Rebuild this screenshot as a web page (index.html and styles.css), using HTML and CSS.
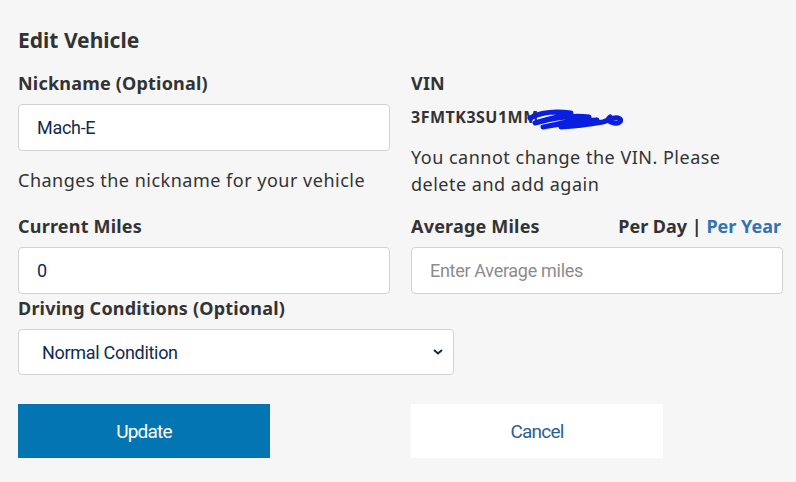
FILE: index.html
```html
<!DOCTYPE html>
<html lang="en">
<head>
  <meta charset="UTF-8" />
  <meta name="viewport" content="width=device-width, initial-scale=1.0" />
  <title>Edit Vehicle</title>
  <link rel="stylesheet" href="styles.css">
</head>
<body>

<h1 class="title">Edit Vehicle</h1>

<div class="row row-top">
  <div class="field">
    <label class="label" for="nickname">Nickname (Optional)</label>
    <input id="nickname" class="input" type="text" value="Mach-E" />
    <p class="help">Changes the nickname for your vehicle</p>
  </div>
  <div class="field">
    <div class="label">VIN</div>
    <div class="vin">3FMTK3SU1MM<svg class="scribble" width="96" height="22" viewBox="0 0 96 22"><path d="M3 10 C14 4 30 3 44 5 C36 8 20 11 8 15 C26 10 46 7 62 9 C50 12 30 16 16 19 C34 16 54 13 70 12 C58 14 44 17 34 19 C50 18 64 16 76 14 C82 12 86 9 91 10 C96 11 94 16 87 15 C81 14 80 11 83 9" fill="none" stroke="#0a1ee0" stroke-width="5" stroke-linecap="round" stroke-linejoin="round"/></svg></div>
    <p class="note">You cannot change the VIN. Please delete and add again</p>
  </div>
</div>

<div class="row row-miles">
  <div class="field">
    <label class="label" for="current">Current Miles</label>
    <input id="current" class="input" type="text" value="0" />
  </div>
  <div class="field">
    <div class="label-line">
      <label class="label" for="average">Average Miles</label>
      <span class="toggle">Per Day <span class="sep">|</span> <a class="toggle-link" href="#">Per Year</a></span>
    </div>
    <input id="average" class="input" type="text" placeholder="Enter Average miles" />
  </div>
</div>

<div class="conditions">
  <label class="label" for="conditions">Driving Conditions (Optional)</label>
  <div class="select-wrap">
    <select id="conditions" class="select">
      <option>Normal Condition</option>
      <option>Severe Condition</option>
    </select>
    <svg class="chevron" width="12" height="8" viewBox="0 0 12 8"><path d="M2 2 L6 5.5 L10 2" fill="none" stroke="#102b4e" stroke-width="2"/></svg>
  </div>
</div>

<div class="row actions">
  <button class="btn btn-primary">Update</button>
  <button class="btn btn-secondary">Cancel</button>
</div>

</body>
</html>
```

FILE: styles.css
```css
body {
  margin: 0;
  padding: 26px 13px 0 18px;
  background: #f6f6f6;
  font-family: "Noto Sans", sans-serif;
  color: #333;
}

.title {
  margin: 0 0 17px;
  font-size: 21px;
  line-height: 28px;
  font-weight: bold;
}

.row {
  display: grid;
  grid-template-columns: 372px 372px;
  column-gap: 21px;
  align-items: start;
}

.row-miles {
  margin-top: 16px;
}

.label {
  display: block;
  font-size: 18px;
  line-height: 24px;
  font-weight: bold;
  letter-spacing: 0.2px;
}

.label-line {
  display: flex;
  justify-content: space-between;
  align-items: center;
}

.toggle {
  font-size: 18px;
  font-weight: bold;
  line-height: 24px;
  margin-right: 2px;
}

.toggle-link {
  color: #3473b0;
  text-decoration: none;
}

.input,
.select {
  box-sizing: border-box;
  display: block;
  width: 100%;
  height: 47px;
  margin-top: 9px;
  padding: 0 18px;
  background: white;
  border: 1px solid #d2d2d2;
  border-radius: 4px;
  font-family: Roboto, sans-serif;
  font-size: 18px;
  color: #102b4e;
  letter-spacing: -0.3px;
}

.input::placeholder {
  color: #8c8c8c;
}

.help,
.note {
  margin: 0;
  font-size: 18px;
  line-height: 27px;
  letter-spacing: 0.5px;
}

.help {
  margin-top: 16px;
}

.note {
  margin-top: 17px;
  max-width: 345px;
}

.vin {
  margin-top: 12px;
  height: 20px;
  font-size: 16px;
  font-weight: bold;
  line-height: 20px;
  letter-spacing: 0.5px;
  white-space: nowrap;
}

.scribble {
  vertical-align: middle;
  margin-left: -12px;
}

.conditions {
  margin-top: 2px;
}

.select-wrap {
  position: relative;
  width: 436px;
}

.select {
  appearance: none;
  height: 46px;
  padding-left: 23px;
}

.chevron {
  position: absolute;
  right: 10px;
  top: 19px;
  pointer-events: none;
}

.actions {
  margin-top: 29px;
  grid-template-columns: 252px 252px;
  column-gap: 141px;
}

.btn {
  height: 54px;
  border: none;
  font-family: Roboto, sans-serif;
  font-size: 19px;
  letter-spacing: -0.8px;
  cursor: pointer;
}

.btn-primary {
  background: #0275b2;
  color: white;
}

.btn-secondary {
  background: white;
  color: #2a5f91;
}
```
